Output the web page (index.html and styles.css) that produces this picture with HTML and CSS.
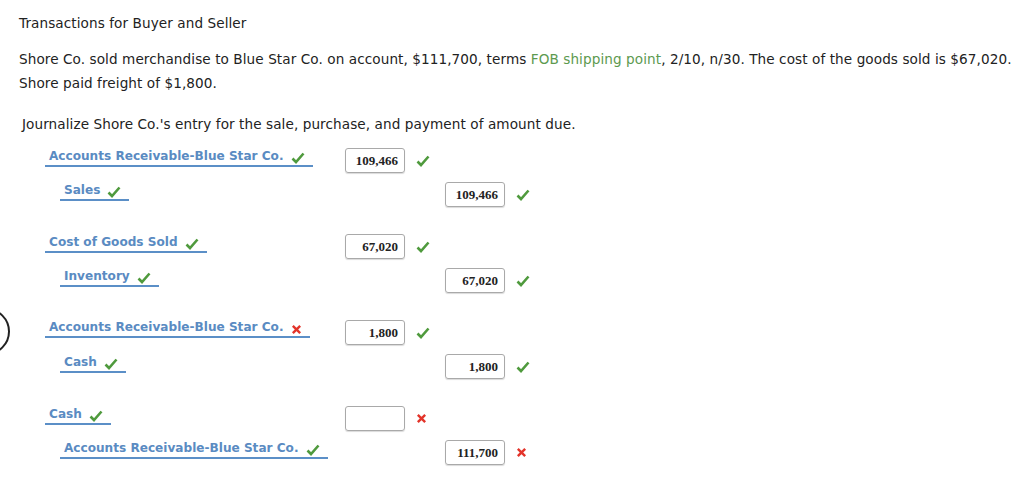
FILE: index.html
```html
<!DOCTYPE html>
<html>
<head>
<meta charset="utf-8">
<link rel="stylesheet" href="styles.css">
</head>
<body>
<div class="page">
  <p class="title">Transactions for Buyer and Seller</p>
  <p class="problem">Shore Co. sold merchandise to Blue Star Co. on account, $111,700, terms <span class="term">FOB shipping point</span>, 2/10, n/30. The cost of the goods sold is $67,020.<br>Shore paid freight of $1,800.</p>
  <p class="instr">Journalize Shore Co.'s entry for the sale, purchase, and payment of amount due.</p>

  <div class="journal">
    <div class="entry">
      <div class="row">
        <div class="acct"><span class="sel">Accounts Receivable-Blue Star Co.<svg class="ok" viewBox="0 0 14 12"><path d="M1.5 6.5 L5 10 L12.5 1.5"/></svg></span></div>
        <div class="amt"><span class="box">109,466</span><svg class="ok" viewBox="0 0 14 12"><path d="M1.5 6.5 L5 10 L12.5 1.5"/></svg></div>
        <div class="amt"></div>
      </div>
      <div class="row">
        <div class="acct cr"><span class="sel">Sales<svg class="ok" viewBox="0 0 14 12"><path d="M1.5 6.5 L5 10 L12.5 1.5"/></svg></span></div>
        <div class="amt"></div>
        <div class="amt"><span class="box">109,466</span><svg class="ok" viewBox="0 0 14 12"><path d="M1.5 6.5 L5 10 L12.5 1.5"/></svg></div>
      </div>
    </div>

    <div class="entry">
      <div class="row">
        <div class="acct"><span class="sel">Cost of Goods Sold<svg class="ok" viewBox="0 0 14 12"><path d="M1.5 6.5 L5 10 L12.5 1.5"/></svg></span></div>
        <div class="amt"><span class="box">67,020</span><svg class="ok" viewBox="0 0 14 12"><path d="M1.5 6.5 L5 10 L12.5 1.5"/></svg></div>
        <div class="amt"></div>
      </div>
      <div class="row">
        <div class="acct cr"><span class="sel">Inventory<svg class="ok" viewBox="0 0 14 12"><path d="M1.5 6.5 L5 10 L12.5 1.5"/></svg></span></div>
        <div class="amt"></div>
        <div class="amt"><span class="box">67,020</span><svg class="ok" viewBox="0 0 14 12"><path d="M1.5 6.5 L5 10 L12.5 1.5"/></svg></div>
      </div>
    </div>

    <div class="entry">
      <div class="row">
        <div class="acct"><span class="sel">Accounts Receivable-Blue Star Co.<svg class="bad" viewBox="0 0 12 12"><path d="M2 2 L10 10 M10 2 L2 10"/></svg></span></div>
        <div class="amt"><span class="box">1,800</span><svg class="ok" viewBox="0 0 14 12"><path d="M1.5 6.5 L5 10 L12.5 1.5"/></svg></div>
        <div class="amt"></div>
      </div>
      <div class="row">
        <div class="acct cr"><span class="sel">Cash<svg class="ok" viewBox="0 0 14 12"><path d="M1.5 6.5 L5 10 L12.5 1.5"/></svg></span></div>
        <div class="amt"></div>
        <div class="amt"><span class="box">1,800</span><svg class="ok" viewBox="0 0 14 12"><path d="M1.5 6.5 L5 10 L12.5 1.5"/></svg></div>
      </div>
    </div>

    <div class="entry">
      <div class="row">
        <div class="acct"><span class="sel">Cash<svg class="ok" viewBox="0 0 14 12"><path d="M1.5 6.5 L5 10 L12.5 1.5"/></svg></span></div>
        <div class="amt"><span class="box"></span><svg class="bad" viewBox="0 0 12 12"><path d="M2 2 L10 10 M10 2 L2 10"/></svg></div>
        <div class="amt"></div>
      </div>
      <div class="row">
        <div class="acct cr"><span class="sel">Accounts Receivable-Blue Star Co.<svg class="ok" viewBox="0 0 14 12"><path d="M1.5 6.5 L5 10 L12.5 1.5"/></svg></span></div>
        <div class="amt"></div>
        <div class="amt"><span class="box">111,700</span><svg class="bad" viewBox="0 0 12 12"><path d="M2 2 L10 10 M10 2 L2 10"/></svg></div>
      </div>
    </div>
  </div>
  <div class="ring"></div>
</div>
</body>
</html>
```

FILE: styles.css
```css
html, body {
  margin: 0;
  padding: 0;
  background: #fff;
}
.page {
  position: relative;
  width: 1024px;
  height: 480px;
  overflow: hidden;
  font-family: "DejaVu Sans", Verdana, sans-serif;
  font-size: 13.6px;
  letter-spacing: 0.08px;
  color: #222;
}
p {
  margin: 0;
}
.title {
  padding: 14px 0 0 19px;
  line-height: 18px;
}
.problem {
  padding: 15px 0 0 19px;
  line-height: 24px;
}
.term {
  color: #5d9a4f;
}
.instr {
  padding: 20px 0 0 22px;
  line-height: 18px;
}
.journal {
  padding: 15px 0 0 45px;
  display: flex;
  flex-direction: column;
  gap: 27px;
}
.entry {
  display: flex;
  flex-direction: column;
  gap: 9px;
}
.row {
  display: grid;
  grid-template-columns: 300px 100px 100px;
  height: 25px;
}
.acct {
  display: flex;
  align-items: flex-start;
}
.acct.cr {
  padding-left: 15px;
}
.sel {
  display: inline-flex;
  align-items: center;
  font-size: 12.1px;
  letter-spacing: 0;
  font-weight: bold;
  color: #5a8bc2;
  border-bottom: 2px solid #5b8fc7;
  padding: 0 8px 1px 4px;
  line-height: 15px;
  white-space: nowrap;
}
.sel svg {
  margin: 4px 0 0 7px;
}
.amt {
  display: flex;
  align-items: center;
  height: 25px;
}
.box {
  box-sizing: border-box;
  width: 60px;
  height: 25px;
  border: 1px solid #a9a9a9;
  border-radius: 3px;
  box-shadow: 0 1px 1px rgba(0,0,0,0.15);
  font-family: "Liberation Serif", "Times New Roman", serif;
  font-weight: bold;
  font-size: 13px;
  letter-spacing: 0;
  color: #222;
  text-align: right;
  padding-right: 6px;
  line-height: 23px;
}
svg.ok {
  width: 14px;
  height: 12px;
  fill: none;
  stroke: #4f9a3d;
  stroke-width: 2.6;
}
svg.bad {
  width: 11px;
  height: 11px;
  fill: none;
  stroke: #e3342a;
  stroke-width: 2.6;
}
.amt svg {
  margin-left: 11px;
}
.ring {
  position: absolute;
  left: -37px;
  top: 308px;
  width: 43px;
  height: 43px;
  border: 2.5px solid #222;
  border-radius: 50%;
}
```
